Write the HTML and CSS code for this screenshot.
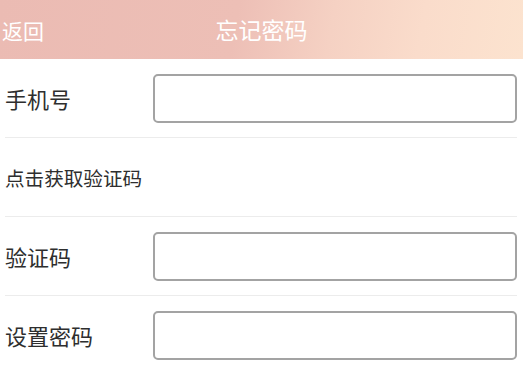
FILE: index.html
```html
<!DOCTYPE html>
<html lang="zh">
<head>
<meta charset="utf-8">
<title>忘记密码</title>
<link rel="stylesheet" href="styles.css">
</head>
<body>
<header class="topbar">
  <span class="back">返回</span>
  <h1 class="title">忘记密码</h1>
</header>
<main class="form">
  <div class="row">
    <label class="label">手机号</label>
    <input class="field" type="text">
  </div>
  <div class="row">
    <span class="code-link">点击获取验证码</span>
  </div>
  <div class="row">
    <label class="label">验证码</label>
    <input class="field" type="text">
  </div>
  <div class="row">
    <label class="label">设置密码</label>
    <input class="field" type="password">
  </div>
</main>
</body>
</html>
```
FILE: styles.css
```css
* { box-sizing: border-box; }
html, body { margin: 0; padding: 0; background: #fff; }
body {
  font-family: "Noto Sans CJK SC", "Noto Sans", sans-serif;
  color: #333;
  overflow: hidden;
}
.topbar {
  height: 59px;
  position: relative;
  display: flex;
  align-items: center;
  justify-content: center;
  background: linear-gradient(100deg, #ebbbb3 0%, #edbfb6 45%, #f5d1c3 63%, #fadccb 80%, #fce3cf 100%);
  color: #fff;
}
.back {
  position: absolute;
  left: 2px;
  top: 50%;
  transform: translateY(-50%);
  font-size: 21px;
  line-height: 1;
}
.title {
  margin: 0;
  font-size: 23px;
  font-weight: normal;
  line-height: 1;
}
.form {
  margin: 0 6px 0 5px;
}
.row {
  height: 79px;
  border-bottom: 1px solid #ececec;
  display: flex;
  align-items: flex-start;
  padding-top: 15px;
}
.row:last-child { border-bottom: none; }
.label {
  width: 148px;
  font-size: 22px;
  line-height: 49px;
  color: #2e2e2e;
}
.code-link {
  font-size: 19.6px;
  line-height: 49px;
  color: #2e2e2e;
}
.field {
  flex: 1;
  height: 49px;
  border: 2px solid #a3a3a3;
  border-radius: 5px;
  background: #fff;
  outline: none;
  padding: 0 8px;
  font-size: 18px;
}
```
